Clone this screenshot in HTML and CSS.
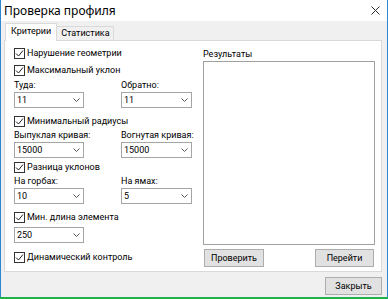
FILE: index.html
```html
<!DOCTYPE html>
<html>
<head>
<meta charset="utf-8">
<link rel="stylesheet" href="styles.css">
</head>
<body>
<div class="window">
  <div class="titlebar">
    <span class="title">Проверка профиля</span>
    <svg class="close" width="9" height="9" viewBox="0 0 9 9"><path d="M0.5 0.5L8.5 8.5M8.5 0.5L0.5 8.5" stroke="#2b2b2b" stroke-width="1"/></svg>
  </div>
  <div class="client">
    <div class="tabs">
      <div class="tab active">Критерии</div>
      <div class="tab">Статистика</div>
    </div>
    <div class="panel">
      <div class="left">
        <label class="cb r1"><span class="box"><svg width="9" height="9" viewBox="0 0 9 9"><path d="M1 4.5L3.5 7L8 1.5" fill="none" stroke="#222" stroke-width="1"/></svg></span>Нарушение геометрии</label>
        <label class="cb r2"><span class="box"><svg width="9" height="9" viewBox="0 0 9 9"><path d="M1 4.5L3.5 7L8 1.5" fill="none" stroke="#222" stroke-width="1"/></svg></span>Максимальный уклон</label>
        <div class="pair lbl l1"><span>Туда:</span><span>Обратно:</span></div>
        <div class="pair c1">
          <div class="combo"><span>11</span><svg width="7" height="4" viewBox="0 0 7 4"><path d="M0.5 0.5L3.5 3.5L6.5 0.5" fill="none" stroke="#555" stroke-width="1"/></svg></div>
          <div class="combo"><span>11</span><svg width="7" height="4" viewBox="0 0 7 4"><path d="M0.5 0.5L3.5 3.5L6.5 0.5" fill="none" stroke="#555" stroke-width="1"/></svg></div>
        </div>
        <label class="cb r3"><span class="box"><svg width="9" height="9" viewBox="0 0 9 9"><path d="M1 4.5L3.5 7L8 1.5" fill="none" stroke="#222" stroke-width="1"/></svg></span>Минимальный радиусы</label>
        <div class="pair lbl l2"><span>Выпуклая кривая:</span><span>Вогнутая кривая:</span></div>
        <div class="pair c2">
          <div class="combo"><span>15000</span><svg width="7" height="4" viewBox="0 0 7 4"><path d="M0.5 0.5L3.5 3.5L6.5 0.5" fill="none" stroke="#555" stroke-width="1"/></svg></div>
          <div class="combo"><span>15000</span><svg width="7" height="4" viewBox="0 0 7 4"><path d="M0.5 0.5L3.5 3.5L6.5 0.5" fill="none" stroke="#555" stroke-width="1"/></svg></div>
        </div>
        <label class="cb r4"><span class="box"><svg width="9" height="9" viewBox="0 0 9 9"><path d="M1 4.5L3.5 7L8 1.5" fill="none" stroke="#222" stroke-width="1"/></svg></span>Разница уклонов</label>
        <div class="pair lbl l3"><span>На горбах:</span><span>На ямах:</span></div>
        <div class="pair c3">
          <div class="combo"><span>10</span><svg width="7" height="4" viewBox="0 0 7 4"><path d="M0.5 0.5L3.5 3.5L6.5 0.5" fill="none" stroke="#555" stroke-width="1"/></svg></div>
          <div class="combo"><span>5</span><svg width="7" height="4" viewBox="0 0 7 4"><path d="M0.5 0.5L3.5 3.5L6.5 0.5" fill="none" stroke="#555" stroke-width="1"/></svg></div>
        </div>
        <label class="cb r5"><span class="box"><svg width="9" height="9" viewBox="0 0 9 9"><path d="M1 4.5L3.5 7L8 1.5" fill="none" stroke="#222" stroke-width="1"/></svg></span>Мин. длина элемента</label>
        <div class="pair c5">
          <div class="combo"><span>250</span><svg width="7" height="4" viewBox="0 0 7 4"><path d="M0.5 0.5L3.5 3.5L6.5 0.5" fill="none" stroke="#555" stroke-width="1"/></svg></div>
        </div>
        <label class="cb r6"><span class="box"><svg width="9" height="9" viewBox="0 0 9 9"><path d="M1 4.5L3.5 7L8 1.5" fill="none" stroke="#222" stroke-width="1"/></svg></span>Динамический контроль</label>
      </div>
      <div class="right">
        <div class="res-label">Результаты</div>
        <div class="results"></div>
        <div class="actions">
          <button class="btn btn-check">Проверить</button>
          <button class="btn btn-go">Перейти</button>
        </div>
      </div>
    </div>
    <div class="footer">
      <button class="btn btn-close">Закрыть</button>
    </div>
  </div>
</div>
</body>
</html>
```
FILE: styles.css
```css
* { box-sizing: border-box; }
html, body { margin: 0; padding: 0; }
body {
  width: 388px;
  height: 299px;
  background: #1fb24a;
  font-family: Roboto, "Noto Sans", sans-serif;
  font-size: 9px;
  color: #000;
  overflow: hidden;
}
.window {
  width: 388px;
  height: 297px;
  border-left: 1px solid #2b87d3;
  border-right: 1px solid #2b87d3;
  background: #f0f0f0;
  display: flex;
  flex-direction: column;
}
.titlebar {
  height: 21px;
  background: #fff;
  display: flex;
  align-items: center;
  padding-left: 3px;
}
.title {
  font-family: "Noto Sans", sans-serif;
  font-size: 12px;
}
.close { margin-left: auto; margin-right: 7px; }
.client {
  flex: 1;
  padding: 0 5px 0 3px;
  display: flex;
  flex-direction: column;
}
.tabs {
  height: 19px;
  display: flex;
  align-items: flex-end;
  padding-left: 1px;
  position: relative;
  z-index: 1;
}
.tab {
  height: 14px;
  border: 1px solid #d9d9d9;
  border-bottom: none;
  padding: 0 3px 0 4px;
  line-height: 13px;
  background: #f0f0f0;
  margin-left: -1px;
  white-space: nowrap;
}
.tab:first-child { margin-left: 0; }
.tab.active {
  height: 18px;
  margin-bottom: -1px;
  background: #fff;
  line-height: 15px;
  padding: 0 5px 0 5px;
}
.panel {
  height: 232px;
  background: #fff;
  border: 1px solid #d9d9d9;
  display: flex;
}
.left {
  width: 198px;
  padding-left: 9px;
  display: flex;
  flex-direction: column;
}
.cb {
  display: flex;
  align-items: center;
  height: 13px;
  line-height: 13px;
  white-space: nowrap;
}
.box {
  width: 11px;
  height: 11px;
  border: 1px solid #333;
  background: #fff;
  margin-right: 2px;
  display: flex;
  align-items: center;
  justify-content: center;
}
.box svg { display: block; }
.pair {
  display: grid;
  grid-template-columns: 107px 80px;
}
.lbl {
  height: 13px;
  line-height: 13px;
  white-space: nowrap;
}
.combo {
  width: 70px;
  height: 16px;
  border: 1px solid #a5a5a5;
  background: #fff;
  display: flex;
  align-items: center;
  justify-content: space-between;
  padding: 0 3px 0 2px;
}
.pair .combo + .combo { width: 71px; }
.r1 { margin-top: 6px; }
.r2 { margin-top: 4px; }
.l1 { margin-top: 2px; }
.r3 { margin-top: 7px; }
.l2 { margin-top: 1px; }
.r4 { margin-top: 3px; }
.l3 { margin-top: 1px; }
.r5 { margin-top: 7px; }
.c5 { margin-top: 3px; }
.r6 { margin-top: 8px; }
.right {
  display: flex;
  flex-direction: column;
  width: 172px;
}
.res-label {
  margin-top: 6px;
  height: 14px;
  line-height: 14px;
}
.results {
  height: 184px;
  border: 1px solid #a0a0a0;
  background: #fff;
}
.actions {
  margin-top: 4px;
  display: flex;
  justify-content: space-between;
  padding-left: 1px;
  padding-right: 1px;
}
.btn {
  font-family: inherit;
  font-size: 9px;
  color: #000;
  background: #e1e1e1;
  border: 1px solid #adadad;
  height: 18px;
  padding: 0;
  margin: 0;
}
.btn-check { width: 60px; }
.btn-go { width: 59px; }
.footer {
  display: flex;
  justify-content: flex-end;
  margin-top: 5px;
}
.btn-close { width: 57px; }
```
